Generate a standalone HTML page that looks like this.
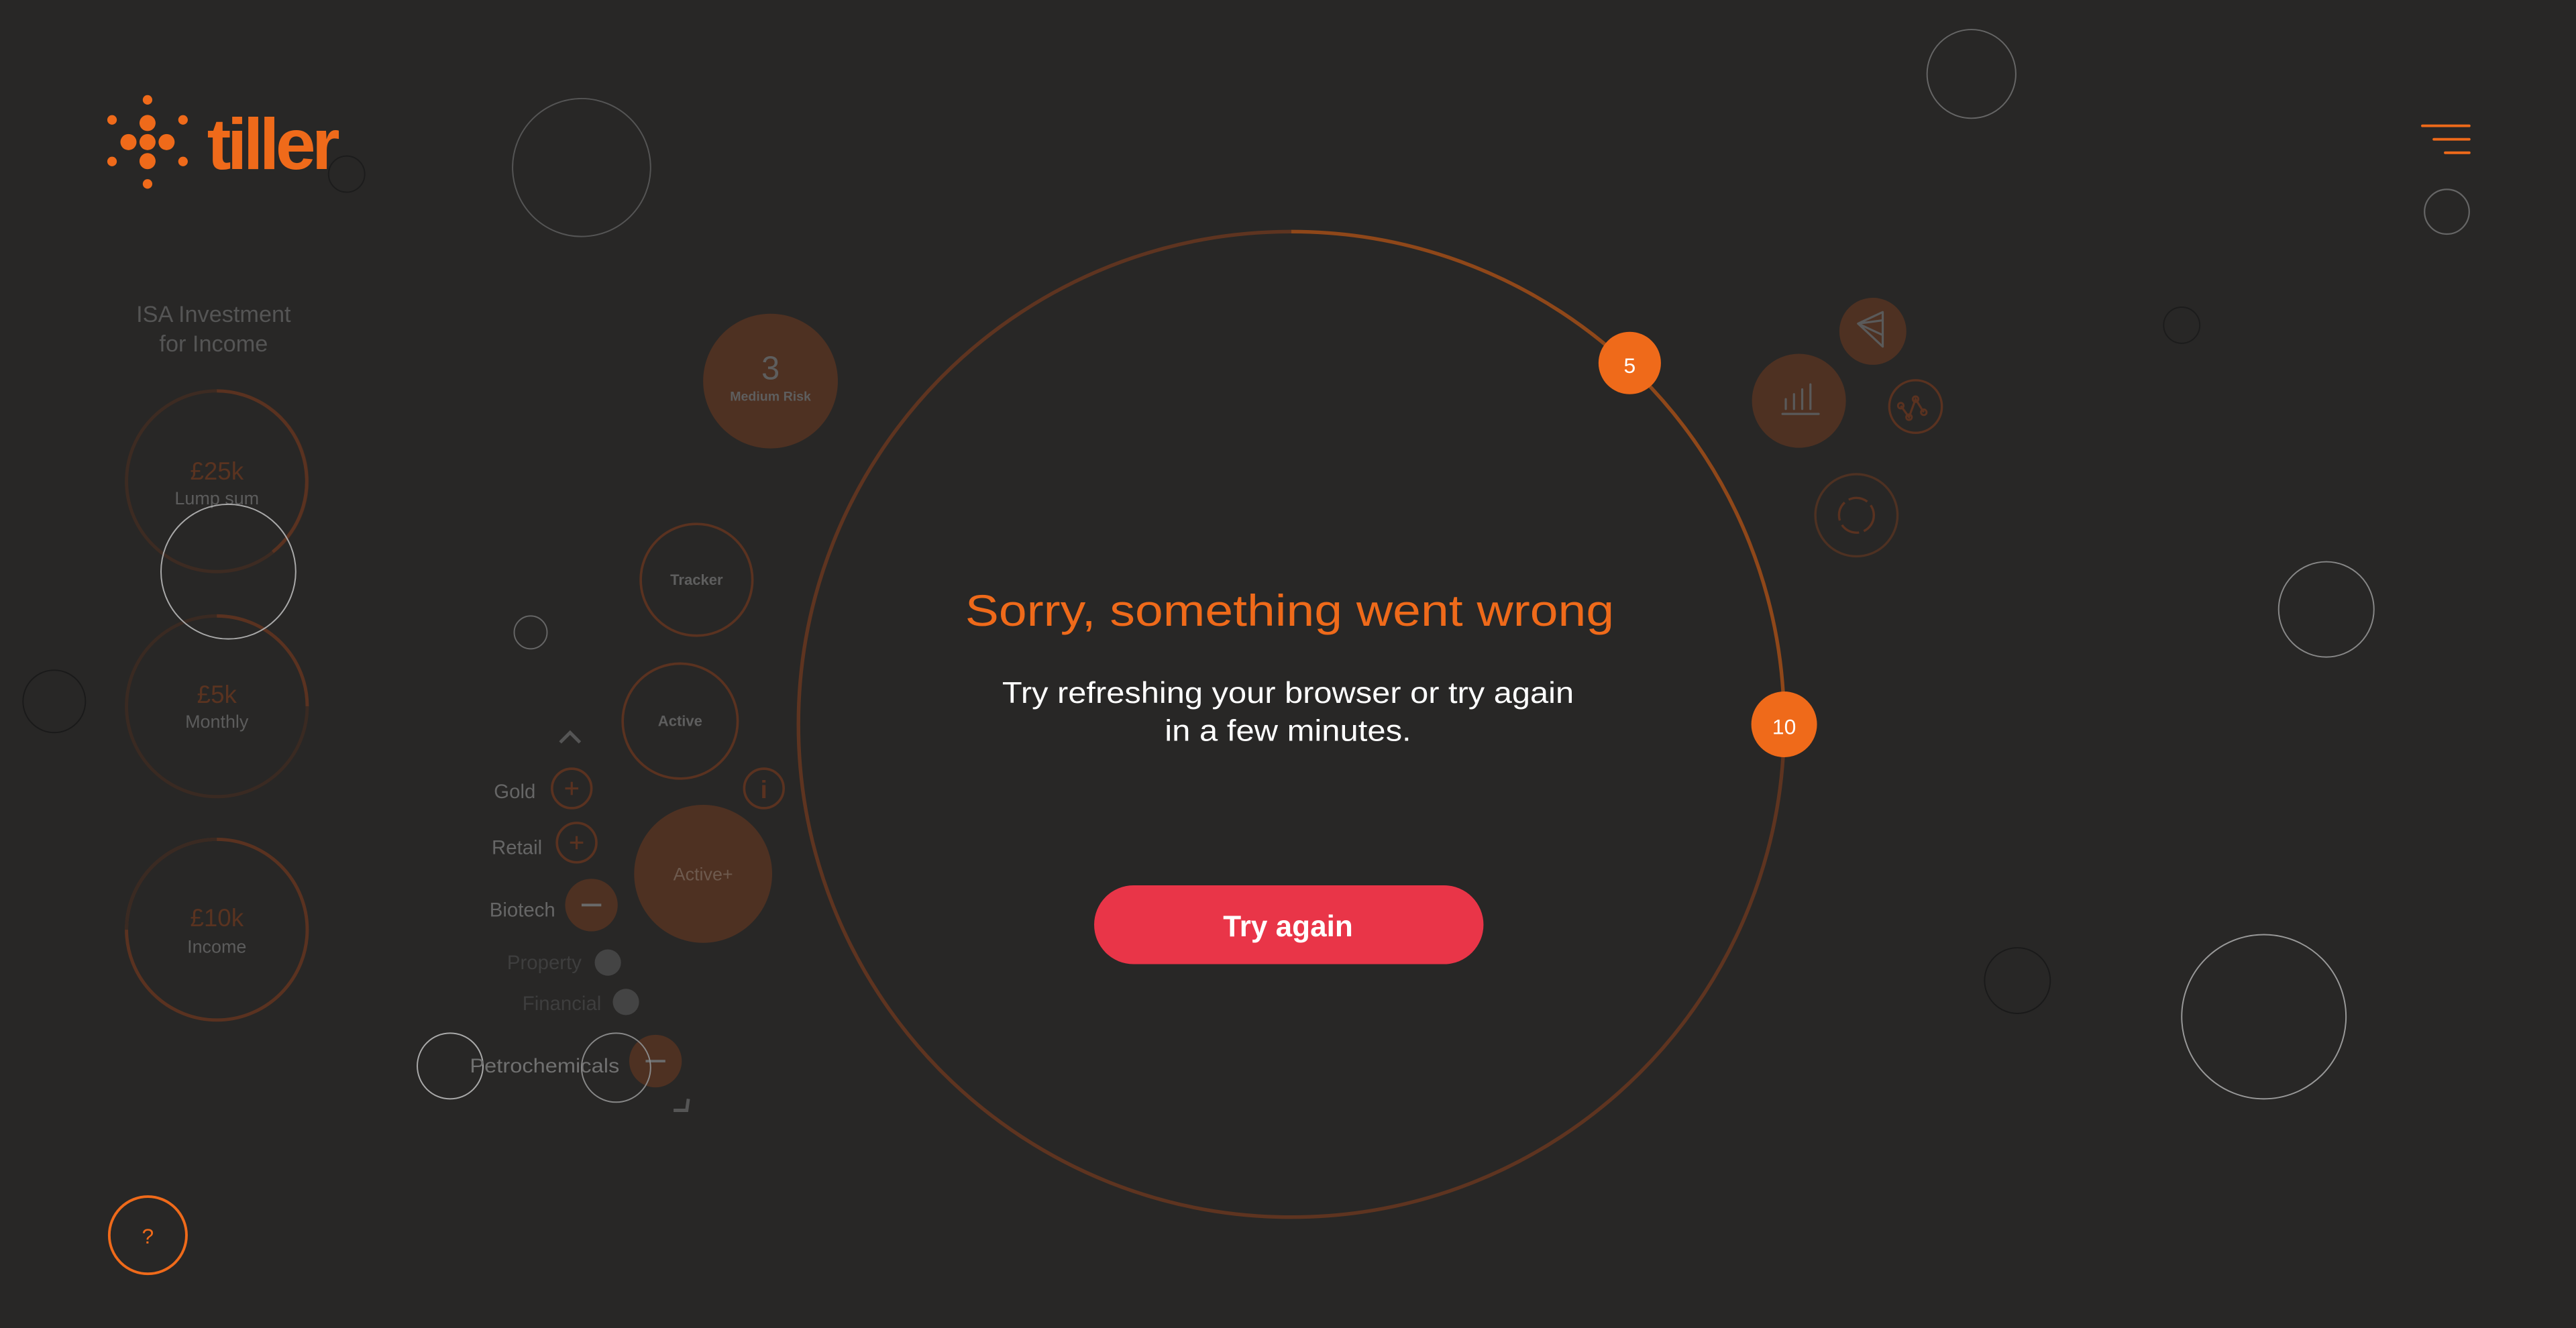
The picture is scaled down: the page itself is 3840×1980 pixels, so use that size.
<!DOCTYPE html>
<html><head><meta charset="utf-8"><style>
html,body{margin:0;padding:0;background:#282726;overflow:hidden}
svg{display:block}
text{font-family:"Liberation Sans",sans-serif}
</style></head><body>
<svg width="3840" height="1980" viewBox="0 0 1568 808.5" xmlns="http://www.w3.org/2000/svg">
<rect width="1568" height="808.5" fill="#282726"/>
<g fill="none" stroke-width="0.8">
<circle cx="354" cy="102" r="42" stroke="#555"/>
<circle cx="1200" cy="45" r="27" stroke="#666"/>
<circle cx="1328" cy="198" r="11" stroke="#1c1c1c"/>
<circle cx="1416" cy="371" r="29" stroke="#888"/>
<circle cx="1378" cy="619" r="50" stroke="#999"/>
<circle cx="1228" cy="597" r="20" stroke="#1a1a1a"/>
<circle cx="33" cy="427" r="19" stroke="#1a1a1a"/>
<circle cx="211" cy="106" r="11" stroke="#1c1c1c"/>
<circle cx="323" cy="385" r="10" stroke="#666"/>
<circle cx="274" cy="649" r="20" stroke="#aaa"/>
</g>
<g fill="#ef6a1a">
<circle cx="89.8" cy="86.5" r="4.9"/><circle cx="78.2" cy="86.5" r="4.9"/><circle cx="101.4" cy="86.5" r="4.9"/>
<circle cx="89.8" cy="74.9" r="4.9"/><circle cx="89.8" cy="98.1" r="4.9"/>
<circle cx="89.8" cy="60.8" r="2.9"/><circle cx="89.8" cy="112" r="2.9"/>
<circle cx="68.2" cy="73" r="2.9"/><circle cx="111.4" cy="73" r="2.9"/>
<circle cx="68.2" cy="98.3" r="2.9"/><circle cx="111.4" cy="98.3" r="2.9"/>
<text x="126" y="102.8" font-size="44" font-weight="bold" letter-spacing="-2.4">tiller</text>
</g>
<g stroke="#ef6a1a" stroke-width="1.6" stroke-linecap="round">
<line x1="1474.5" y1="76.6" x2="1503" y2="76.6"/>
<line x1="1481.5" y1="84.8" x2="1503" y2="84.8"/>
<line x1="1488.4" y1="93" x2="1503" y2="93"/>
</g>
<circle cx="1489.4" cy="128.9" r="13.6" fill="none" stroke="#666" stroke-width="0.9"/>
<g text-anchor="middle" fill="#555" font-size="14">
<text x="130" y="196">ISA Investment</text>
<text x="130" y="214">for Income</text>
</g>
<g fill="none" stroke-width="2">
<circle cx="132" cy="293" r="55" stroke="#3d2b22"/>
<path d="M132 238 A55 55 0 0 1 166 336" stroke="#5a3220"/>
<circle cx="132" cy="430" r="55" stroke="#3a2a22"/>
<path d="M132 375 A55 55 0 0 1 187 430" stroke="#5a3220"/>
<circle cx="132" cy="566" r="55" stroke="#5a3220"/>
<path d="M132 511 A55 55 0 0 0 77 566" stroke="#3a2a22"/>
</g>
<g text-anchor="middle">
<text x="132" y="292" font-size="15" fill="#5a3320">£25k</text>
<text x="132" y="307" font-size="11" fill="#5c5c5c">Lump sum</text>
<text x="132" y="428" font-size="15" fill="#5a3320">£5k</text>
<text x="132" y="443" font-size="11" fill="#5c5c5c">Monthly</text>
<text x="132" y="564" font-size="15" fill="#5a3320">£10k</text>
<text x="132" y="580" font-size="11" fill="#5c5c5c">Income</text>
</g>
<circle cx="139" cy="348" r="41" fill="none" stroke="#aaa" stroke-width="0.8"/>
<circle cx="469" cy="232" r="41" fill="#4e3122"/>
<g text-anchor="middle" fill="#5e5e5e">
<text x="469" y="231" font-size="20">3</text>
<text x="469" y="244" font-size="8" font-weight="bold">Medium Risk</text>
</g>
<g fill="none" stroke="#5a3220" stroke-width="1.5">
<circle cx="424" cy="353" r="34"/>
<circle cx="414" cy="439" r="35"/>
<circle cx="465" cy="480" r="12"/>
<circle cx="348" cy="480" r="12"/>
<circle cx="351" cy="513" r="12"/>
</g>
<circle cx="428" cy="532" r="42" fill="#4e3122"/>
<g text-anchor="middle" font-weight="bold" fill="#5e5e5e">
<text x="424" y="356" font-size="9">Tracker</text>
<text x="414" y="442" font-size="9">Active</text>
</g>
<text x="428" y="536" text-anchor="middle" font-size="11" fill="#6e5a4e">Active+</text>
<text x="465" y="486" text-anchor="middle" font-size="15" font-weight="bold" fill="#5a3220">i</text>
<path d="M341 452 L347 446 L353 452" fill="none" stroke="#555" stroke-width="2"/>
<g stroke="#5a3220" stroke-width="1.3">
<line x1="344" y1="480" x2="352" y2="480"/><line x1="348" y1="476" x2="348" y2="484"/>
<line x1="347" y1="513" x2="355" y2="513"/><line x1="351" y1="509" x2="351" y2="517"/>
</g>
<circle cx="360" cy="551" r="16" fill="#4e3122"/>
<line x1="354" y1="551" x2="366" y2="551" stroke="#6a6a6a" stroke-width="1.6"/>
<circle cx="370" cy="586" r="8" fill="#444"/>
<circle cx="381" cy="610" r="8" fill="#444"/>
<circle cx="399" cy="646" r="16" fill="#4e3122"/>
<line x1="393" y1="646" x2="405" y2="646" stroke="#6a6a6a" stroke-width="1.6"/>
<g text-anchor="end" font-size="12">
<text x="326" y="486" fill="#666">Gold</text>
<text x="330" y="520" fill="#666">Retail</text>
<text x="338" y="558" fill="#666">Biotech</text>
<text x="354" y="590" fill="#3e3e3e">Property</text>
<text x="366" y="615" fill="#3e3e3e">Financial</text>
<text x="377" y="653" fill="#707070" textLength="91" lengthAdjust="spacingAndGlyphs">Petrochemicals</text>
</g>
<circle cx="375" cy="650" r="21" fill="none" stroke="#888" stroke-width="0.8"/>
<path d="M410 676 L418 676 L419 669" fill="none" stroke="#555" stroke-width="2"/>
<g fill="none" stroke-width="2.2">
<path d="M1086 441 A300 300 0 1 1 786 141" stroke="#5e3420"/>
<path d="M786 141 A300 300 0 0 1 1086 441" stroke="#8f4719"/>
</g>
<circle cx="992" cy="221" r="19" fill="#ef6a1a"/>
<text x="992" y="227" text-anchor="middle" font-size="13" fill="#fff">5</text>
<circle cx="1086" cy="441" r="20" fill="#ef6a1a"/>
<text x="1086" y="447" text-anchor="middle" font-size="13" fill="#fff">10</text>
<text x="785" y="381" text-anchor="middle" font-size="27" fill="#ef6a1a" textLength="395" lengthAdjust="spacingAndGlyphs">Sorry, something went wrong</text>
<text x="784" y="428" text-anchor="middle" font-size="18" fill="#fff" textLength="348" lengthAdjust="spacingAndGlyphs">Try refreshing your browser or try again</text>
<text x="784" y="451" text-anchor="middle" font-size="18" fill="#fff" textLength="150" lengthAdjust="spacingAndGlyphs">in a few minutes.</text>
<rect x="666" y="539" width="237" height="48" rx="24" fill="#e93548"/>
<text x="784" y="570" text-anchor="middle" font-size="18" font-weight="bold" fill="#fff">Try again</text>
<circle cx="1095" cy="244" r="28.6" fill="#4e3122"/>
<g stroke="#5a5a5a" stroke-width="1.3" stroke-linecap="round">
<line x1="1085" y1="252" x2="1107" y2="252"/>
<line x1="1087" y1="249" x2="1087" y2="243"/>
<line x1="1092" y1="249" x2="1092" y2="240"/>
<line x1="1097" y1="249" x2="1097" y2="237"/>
<line x1="1102" y1="249" x2="1102" y2="234"/>
</g>
<circle cx="1140" cy="201.7" r="20.4" fill="#4e3122"/>
<path d="M1131 197 L1146 190 L1146 211 Z M1131 197 L1146 195 M1131 197 L1146 204" fill="none" stroke="#5a5a5a" stroke-width="1.3" stroke-linejoin="round"/>
<circle cx="1166" cy="247.5" r="16" fill="none" stroke="#5a3220" stroke-width="1.4"/>
<path d="M1157 247 L1162 254 L1166 243 L1171 251" fill="none" stroke="#5a3220" stroke-width="1.3"/>
<g fill="none" stroke="#5a3220" stroke-width="1.2"><circle cx="1157" cy="247" r="1.7"/><circle cx="1162" cy="254" r="1.7"/><circle cx="1166" cy="243" r="1.7"/><circle cx="1171" cy="251" r="1.7"/></g>
<circle cx="1130" cy="313.7" r="25" fill="none" stroke="#4e3122" stroke-width="1.4"/>
<circle cx="1130" cy="313.7" r="10.6" fill="none" stroke="#5a3220" stroke-width="1.4" stroke-dasharray="12 3"/>
<circle cx="90" cy="752" r="23.5" fill="none" stroke="#ef6a1a" stroke-width="1.6"/>
<text x="90" y="757" text-anchor="middle" font-size="13" fill="#ef6a1a">?</text>
</svg>
</body></html>
